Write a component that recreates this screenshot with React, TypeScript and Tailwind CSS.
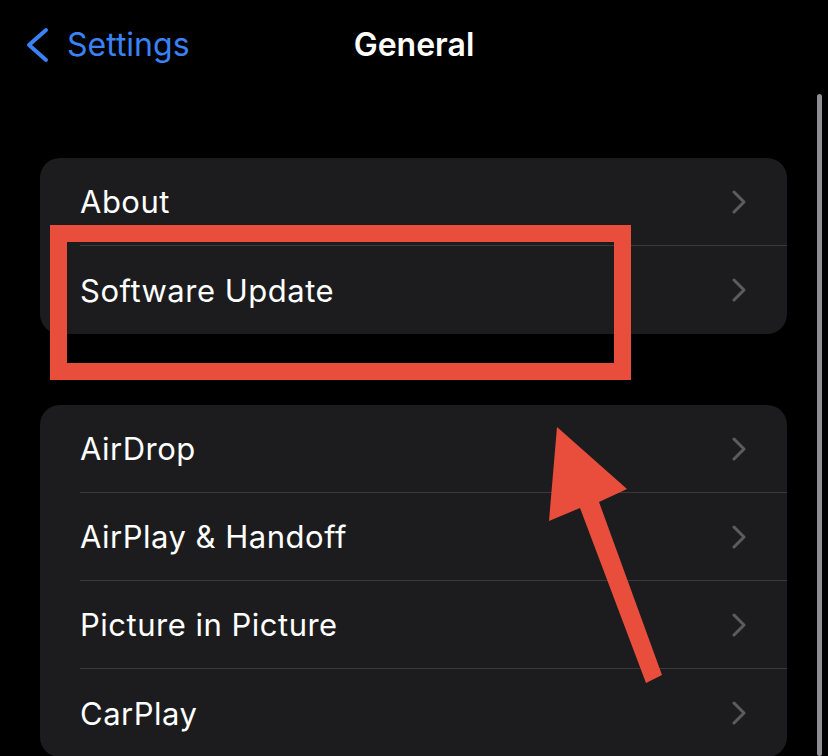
import { ReactNode } from "react";

const groups = [["About", "Software Update"], ["AirDrop", "AirPlay & Handoff", "Picture in Picture", "CarPlay"]];

const Chevron = () => (
  <svg width="14" height="24" viewBox="0 0 14 24" fill="none">
    <path d="M2 2l10 10-10 10" stroke="#5c5c60" strokeWidth="3" strokeLinecap="round" strokeLinejoin="round" />
  </svg>
);

const Row = ({ children, last }: { children: ReactNode; last: boolean }) => (
  <div className="flex h-[88px] pl-10">
    <div className={`flex flex-1 items-center justify-between pr-[41px] ${last ? "" : "border-b border-[#3a3a3c]"}`}>
      <span className="text-[31px] leading-none tracking-[0.5px] text-white">{children}</span>
      <Chevron />
    </div>
  </div>
);

export default function App() {
  return (
    <div className="relative h-[756px] w-[828px] overflow-hidden bg-black font-['Inter',sans-serif]">
      {/* nav bar */}
      <div className="grid h-[89px] grid-cols-[1fr_auto_1fr] items-center">
        <div className="flex items-center gap-[18px] pl-[25px] text-[#3a82f7]">
          <svg width="24" height="36" viewBox="0 0 24 36" fill="none">
            <path d="M21 3L4 18l17 15" stroke="currentColor" strokeWidth="4" strokeLinecap="round" strokeLinejoin="round" />
          </svg>
          <span className="text-[32px] leading-none">Settings</span>
        </div>
        <div className="text-[32px] font-semibold leading-none text-white">General</div>
        <div />
      </div>

      <div className="flex flex-col gap-[71px] pl-10 pr-[41px] pt-[69px]">
        {groups.map((g, i) => (
          <div key={i} className="overflow-hidden rounded-[20px] bg-[#1c1c1e]">
            {g.map((label, j) => (
              <Row key={label} last={j === g.length - 1}>
                {label}
              </Row>
            ))}
          </div>
        ))}
      </div>

      {/* scroll indicator */}
      <div className="absolute bottom-0 right-[6px] top-[94px] w-[5px] rounded-full bg-[#8e8e92]" />

      {/* annotation */}
      <div className="absolute left-[50px] top-[225px] h-[155px] w-[581px] border-[17px] border-[#e94e3c]" />
      <svg className="absolute inset-0" width="828" height="756" viewBox="0 0 828 756">
        <polygon
          points="557,427 627,489 599,502 662,675 646,683 580,508 549,521"
          fill="#e94e3c"
        />
      </svg>
    </div>
  );
}
